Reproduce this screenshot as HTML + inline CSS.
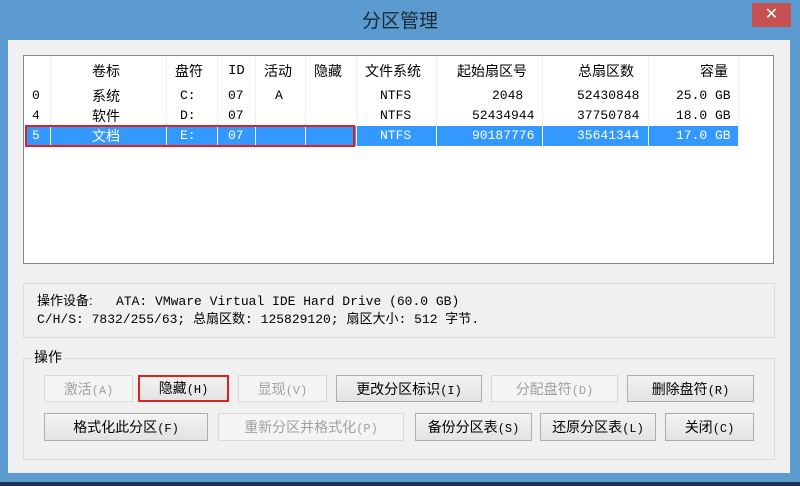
<!DOCTYPE html>
<html><head><meta charset="utf-8"><style>
*{box-sizing:border-box;margin:0;padding:0}
body{width:800px;height:486px;overflow:hidden;background:#1d3550;font-family:"Liberation Sans","Noto Sans CJK SC",sans-serif;font-size:13px;color:#000;position:relative}
.frame{position:absolute;left:0;top:0;width:800px;height:482px;background:#5b9bcf}
.title{position:absolute;left:0;top:6px;width:800px;text-align:center;font-size:19px;color:#1a2a3a}
.close{position:absolute;left:752px;top:3px;width:39px;height:24px;background:#c75050;color:#fff;text-align:center;font-size:16px;line-height:24px}
.client{position:absolute;left:8px;top:40px;width:782px;height:433px;background:#f0f0f0}
.abs{position:absolute}
.list{left:23px;top:55px;width:751px;height:209px;background:#fff;border:1px solid #828790}
.cell{position:absolute;white-space:nowrap;font-family:"Liberation Mono","Noto Sans CJK SC",monospace;height:20px;line-height:20px}
.cj{font-family:"Liberation Sans","Noto Sans CJK SC",sans-serif;font-size:14px}
.vl{position:absolute;width:1px;background:#f0f0f0;top:56px;height:90px}
.sel{left:25px;top:126px;width:713px;height:20px;background:#3399ff}
.red{border:2px solid #e02020}
.box{border:1px solid #dcdcdc}
.btn{position:absolute;border:1px solid #acacac;background:linear-gradient(#f2f2f2,#e3e3e3);text-align:center;line-height:26px;font-size:14px;font-family:"Liberation Sans","Noto Sans CJK SC",sans-serif}
.btn small{font-family:"Liberation Mono",monospace;font-size:12px}
.dis{color:#a0a0a0;background:#f4f4f4;border-color:#d9d9d9}
</style></head><body>
<div class="frame"></div>
<div class="title">分区管理</div>
<div class="close">✕</div>
<div class="client"></div>
<div class="abs list"></div>
<div class="abs sel"></div>
<div class="vl" style="left:50px"></div><div class="vl" style="left:166px"></div><div class="vl" style="left:217px"></div><div class="vl" style="left:255px"></div><div class="vl" style="left:305px"></div><div class="vl" style="left:356px"></div><div class="vl" style="left:436px"></div><div class="vl" style="left:542px"></div><div class="vl" style="left:648px"></div><div class="vl" style="left:738px"></div>
<div>
<div class="cell cj" style="left:92px;top:61px">卷标</div>
<div class="cell cj" style="left:175px;top:61px">盘符</div>
<div class="cell" style="left:228px;top:61px;font-size:14px">ID</div>
<div class="cell cj" style="left:264px;top:61px">活动</div>
<div class="cell cj" style="left:314px;top:61px">隐藏</div>
<div class="cell cj" style="left:365px;top:61px">文件系统</div>
<div class="cell cj" style="left:457px;top:61px">起始扇区号</div>
<div class="cell cj" style="left:578px;top:61px">总扇区数</div>
<div class="cell cj" style="left:700px;top:61px">容量</div>
</div>
<div style="font-size:13px">
<div class="cell" style="left:32px;top:86px">0</div><div class="cell cj" style="left:92px;top:86px">系统</div><div class="cell" style="left:180px;top:86px">C:</div><div class="cell" style="left:228px;top:86px">07</div><div class="cell" style="left:275px;top:86px">A</div><div class="cell" style="left:380px;top:86px">NTFS</div><div class="cell" style="left:492px;top:86px">2048</div><div class="cell" style="left:577px;top:86px">52430848</div><div class="cell" style="left:676px;top:86px">25.0 GB</div>
<div class="cell" style="left:32px;top:106px">4</div><div class="cell cj" style="left:92px;top:106px">软件</div><div class="cell" style="left:180px;top:106px">D:</div><div class="cell" style="left:228px;top:106px">07</div><div class="cell" style="left:380px;top:106px">NTFS</div><div class="cell" style="left:472px;top:106px">52434944</div><div class="cell" style="left:577px;top:106px">37750784</div><div class="cell" style="left:676px;top:106px">18.0 GB</div>
<div style="color:#fff"><div class="cell" style="left:32px;top:126px">5</div><div class="cell cj" style="left:92px;top:126px">文档</div><div class="cell" style="left:180px;top:126px">E:</div><div class="cell" style="left:228px;top:126px">07</div><div class="cell" style="left:380px;top:126px">NTFS</div><div class="cell" style="left:472px;top:126px">90187776</div><div class="cell" style="left:577px;top:126px">35641344</div><div class="cell" style="left:676px;top:126px">17.0 GB</div></div>
</div>
<div class="abs red" style="left:25px;top:125px;width:330px;height:22px"></div>
<div class="abs box" style="left:23px;top:283px;width:752px;height:55px"></div>
<div class="cell" style="left:37px;top:291px;font-size:13px"><span style="font-family:'Liberation Sans','Noto Sans CJK SC'">操作设备:</span>&nbsp;&nbsp;&nbsp;ATA: VMware Virtual IDE Hard Drive (60.0 GB)</div>
<div class="cell" style="left:37px;top:309px;font-size:13px">C/H/S: 7832/255/63; <span style="font-family:'Liberation Sans','Noto Sans CJK SC'">总扇区数</span>: 125829120; <span style="font-family:'Liberation Sans','Noto Sans CJK SC'">扇区大小</span>: 512 <span style="font-family:'Liberation Sans','Noto Sans CJK SC'">字节</span>.</div>
<div class="abs box" style="left:23px;top:358px;width:752px;height:102px"></div>
<div class="abs" style="left:32px;top:347px;background:#f0f0f0;padding:0 2px;font-size:14px;line-height:20px">操作</div>
<div class="btn dis" style="left:44px;top:375px;width:89px;height:27px">激活<small>(A)</small></div>
<div class="btn" style="left:138px;top:375px;width:91px;height:27px;border:2px solid #e02020;line-height:23px">隐藏<small>(H)</small></div>
<div class="btn dis" style="left:238px;top:375px;width:89px;height:27px">显现<small>(V)</small></div>
<div class="btn" style="left:336px;top:375px;width:146px;height:27px">更改分区标识<small>(I)</small></div>
<div class="btn dis" style="left:491px;top:375px;width:127px;height:27px">分配盘符<small>(D)</small></div>
<div class="btn" style="left:627px;top:375px;width:127px;height:27px">删除盘符<small>(R)</small></div>
<div class="btn" style="left:44px;top:413px;width:164px;height:28px">格式化此分区<small>(F)</small></div>
<div class="btn dis" style="left:218px;top:413px;width:186px;height:28px">重新分区并格式化<small>(P)</small></div>
<div class="btn" style="left:415px;top:413px;width:117px;height:28px">备份分区表<small>(S)</small></div>
<div class="btn" style="left:540px;top:413px;width:116px;height:28px">还原分区表<small>(L)</small></div>
<div class="btn" style="left:665px;top:413px;width:89px;height:28px">关闭<small>(C)</small></div>
</body></html>
